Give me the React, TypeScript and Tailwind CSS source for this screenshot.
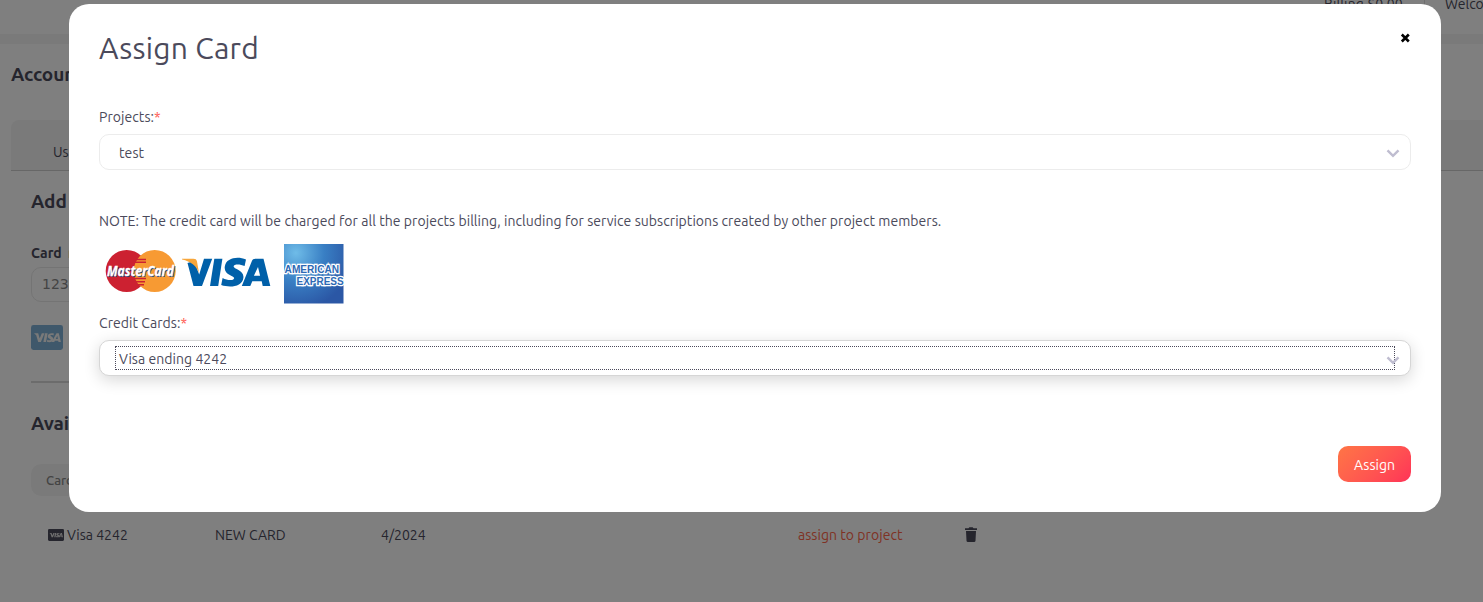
import type { ReactNode } from "react";

function Chevron() {
  return (
    <svg width="14" height="10" viewBox="0 0 14 10" fill="none" stroke="#bfbdd0" strokeWidth="2.4" aria-hidden="true">
      <path d="M1.5 2.3 7 7.8l5.5-5.5" />
    </svg>
  );
}

function MasterCardLogo() {
  return (
    <svg width="72" height="44" viewBox="0 0 72 44" className="block shrink-0">
      <circle cx="21.7" cy="22" r="21" fill="#cc2131" />
      <circle cx="49.7" cy="22" r="21" fill="#f79a33" />
      <path d="M31 10.5h10M30 13.2h11M30 29.5h11M31 32.7h9M33 35.7h6" stroke="#cc2131" strokeWidth="1.6" />
      <text x="2.8" y="27.8" textLength="67" lengthAdjust="spacingAndGlyphs" fill="#26447a" fontFamily="Open Sans, sans-serif" fontWeight="700" fontStyle="italic" fontSize="15">MasterCard</text>
      <text x="2" y="27" textLength="67" lengthAdjust="spacingAndGlyphs" fill="#fff" stroke="#fff" strokeWidth="0.3" fontFamily="Open Sans, sans-serif" fontWeight="700" fontStyle="italic" fontSize="15">MasterCard</text>
    </svg>
  );
}

function VisaLogo() {
  return (
    <svg width="90" height="30" viewBox="0 0 90 30" className="block shrink-0">
      <path fill="#0060a9" d="M12 4 17.2 17.5 22 1.7H30.2L20 29H11.5L5.5 6Z" />
      <path fill="#0060a9" d="M32.3 1.7H40.4L36.2 29H28Z" />
      <path fill="#0060a9" d="M64 2.4 62.6 9.1C58.5 7 52 6.6 51.6 9.4c-.3 2.5 10.7 3.6 9.8 11.3C60.4 29.8 48 31 39.2 28l1.4-7c4.7 2.6 11.2 2.8 11.5.2.4-2.8-10.6-3.1-9.3-11.6C44 .9 55.3-1 64 2.4Z" />
      <path fill="#0060a9" fillRule="evenodd" d="M73.5 1.7h8L88.3 29h-7.6l-1-4.7h-9.4L68.3 29h-8.5L69.8 4.2c.8-1.8 1.7-2.5 3.7-2.5ZM76 10 71.9 18.8h6.2Z" />
      <path fill="#f7a63b" d="M0 1.7h11.5c2 0 3 .7 3.5 2.7L17 16C14.3 8.7 9 4.4 0 2.5Z" />
    </svg>
  );
}

function AmexLogo() {
  return (
    <svg width="61" height="60" viewBox="0 0 61 60" className="block shrink-0">
      <defs>
        <radialGradient id="amex" cx="0.2" cy="0.15" r="0.95">
          <stop offset="0" stopColor="#6fbce8" />
          <stop offset="0.5" stopColor="#397fc4" />
          <stop offset="1" stopColor="#2b57a5" />
        </radialGradient>
      </defs>
      <rect width="59.5" height="59.5" fill="url(#amex)" />
      <g fontFamily="Liberation Sans, sans-serif" fontWeight="700" fontSize="10.8" fill="#2d69b4" stroke="#fff" strokeWidth="2.6" paintOrder="stroke">
        <text x="0.6" y="29.2" textLength="54.5" lengthAdjust="spacingAndGlyphs">AMERICAN</text>
        <text x="12.5" y="41.4" textLength="47.2" lengthAdjust="spacingAndGlyphs">EXPRESS</text>
      </g>
    </svg>
  );
}

function CardBadge({ width, height, bg, fg }: { width: number; height: number; bg: string; fg: string }) {
  return (
    <svg width={width} height={height} viewBox="0 0 32 26" preserveAspectRatio="none" className="block shrink-0">
      <rect width="32" height="26" rx="2.5" fill={bg} />
      <g fill={fg}>
        <path d="M3 8.5h4.2l1.5 5.6 2.1-5.6h2.7L9.9 17.8H7.2L5.2 10.6Z" />
        <path d="M14 8.5h2.6L15 17.8h-2.6Z" />
        <path d="M22.9 8.8l-.4 2.1c-1.7-.7-3.2-.6-3.2.1 0 .9 2.9 1.1 2.9 3.6 0 3-3.2 4-6.3 2.9l.4-2.1c1.7.8 3.3.7 3.3-.1 0-1-2.9-1-2.9-3.5 0-2.7 3.1-3.9 6.2-3Z" />
        <path fillRule="evenodd" d="M25.5 8.5h2.3l2.1 9.3h-2.4l-.3-1.5h-3.3l-.7 1.5h-2.6ZM26.3 11.3l-1.5 3.2h2.1Z" />
      </g>
    </svg>
  );
}

function Label({ children }: { children: ReactNode }) {
  return (
    <div className="h-5 text-[14px] leading-5 tracking-[0.06px]">
      {children}
      <span className="text-[#ff5a50]">*</span>
    </div>
  );
}

function AccountPage() {
  return (
    <div className="h-full w-full overflow-hidden bg-white">
      <header className="flex h-[34px] justify-end overflow-hidden">
        <div className="-mt-[6px] flex h-5 w-[159px] shrink-0 text-[14px] leading-5">
          <span className="w-[100px] shrink-0 tracking-[0.12px] whitespace-nowrap">Billing $0.00</span>
          <span className="mr-5 shrink-0 border-l border-[#dddddd]" />
          <span className="shrink-0">Welcome</span>
        </div>
      </header>
      <div className="h-[10px] bg-[#f5f5f5]" />
      <main className="pl-[11px]">
        <h1 className="mt-4 h-7 text-[19px] leading-7 font-semibold tracking-[-0.1px]">Account</h1>
        <nav className="mt-8 flex h-[51px] items-end rounded-tl-lg border-b border-[#cecece] bg-[#f5f5f5] pb-2 pl-[42px] text-[14px] leading-5">
          Users
        </nav>
        <section className="pl-5">
          <h2 className="mt-4 h-7 text-[19px] leading-7 font-semibold tracking-[-0.1px]">Add Card</h2>
          <div className="mt-[28px] h-5 text-[14px] leading-5 font-semibold [word-spacing:3px]">Card number</div>
          <div className="mt-1 flex h-[35px] w-[400px] items-center rounded-[10px] border border-[#e8e8e8] pl-[10px] font-['DejaVu_Sans',sans-serif] text-[14px] text-[#888]">
            1234
          </div>
          <div className="mt-[23px] h-[25px]">
            <CardBadge width={32} height={25} bg="#7fb0d6" fg="#f2f2f2" />
          </div>
          <div className="mt-[31px] h-[2px] w-[600px] bg-[#d8d8d8]" />
          <h2 className="mt-[26px] h-7 text-[19px] leading-7 font-semibold tracking-[-0.1px]">Available</h2>
          <div className="mt-[27px] flex h-8 w-[960px] items-center rounded-[10px] bg-[#f5f5f5] pt-px pl-[15px] text-[13px] font-medium text-[#888]">
            Card
          </div>
          <div className="mt-[29px] flex h-5 pl-[17px] text-[14px] leading-5">
            <span className="flex w-[167px] items-center gap-[3px]">
              <CardBadge width={16} height={12} bg="#4b4a5b" fg="#dddddd" />
              <span>Visa 4242</span>
            </span>
            <span className="w-[166px]">NEW CARD</span>
            <span className="w-[417px]">4/2024</span>
            <span className="w-[167px] tracking-[0.05px] text-[#ff6548]">assign to project</span>
            <svg width="12" height="15" viewBox="0 0 12 15" fill="#4b4a5b" className="mt-[2px]">
              <path d="M0 1.2h3.5L4.3.3h3.4l.8.9H12v1.9H0ZM1 4h10l-.5 9.7q-.1 1.3-1.4 1.3H2.9q-1.3 0-1.4-1.3Z" />
            </svg>
          </div>
        </section>
      </main>
    </div>
  );
}

export default function App() {
  return (
    <div className="grid h-[602px] w-[1483px] overflow-hidden font-['Ubuntu','Noto_Sans',sans-serif] text-[#4b4a5b]">
      <div className="col-start-1 row-start-1 h-[602px] w-[1483px]">
        <AccountPage />
      </div>
      <div className="z-10 col-start-1 row-start-1 flex items-start bg-black/50 pt-1 pl-[69px]">
        <section className="h-[508px] w-[1372px] rounded-[20px] bg-white px-[30px] pt-[26px]" role="dialog" aria-label="Assign Card">
          <div className="flex h-9 justify-between">
            <h1 className="text-[30px] leading-9 tracking-[0.25px]">Assign Card</h1>
            <button aria-label="Close" className="mt-[3px] flex h-[10px] w-[11px]">
              <svg width="11" height="10" viewBox="0 0 11 10" stroke="#000" strokeWidth="2.6" fill="none">
                <path d="m1.8 1.5 7 7M8.8 1.5l-7 7" />
              </svg>
            </button>
          </div>
          <div className="mt-[41px]">
            <Label>Projects:</Label>
          </div>
          <div className="mt-[7px] flex h-9 items-center justify-between rounded-[10px] border border-[#ececec] pt-[2px] pr-[10px] pl-[19px] text-[14px] tracking-[0.1px]">
            <span>test</span>
            <Chevron />
          </div>
          <p className="mt-[41px] h-5 text-[14px] leading-5 tracking-[0.055px] whitespace-nowrap">
            NOTE: The credit card will be charged for all the projects billing, including for service subscriptions created by other project members.
          </p>
          <div className="mt-[13px] flex h-[60px] items-start pl-[6px]">
            <span className="mt-[5px]"><MasterCardLogo /></span>
            <span className="mt-[13px] ml-[5px]"><VisaLogo /></span>
            <span className="ml-[12px]"><AmexLogo /></span>
          </div>
          <div className="mt-[9px]">
            <Label>Credit Cards:</Label>
          </div>
          <div className="relative mt-[7px] flex h-9 items-center rounded-[10px] border border-[#d6d6d6] bg-white pl-[15px] text-[14px] shadow-[0_4px_16px_rgba(0,0,0,0.16)]">
            <span className="flex h-6 w-[1280px] items-center border border-dotted border-[#4b4a5b] pt-[2px] pl-[3px] tracking-[0.05px]">Visa ending 4242</span>
            <span className="absolute top-[14px] right-[10px]"><Chevron /></span>
          </div>
          <div className="mt-[70px] flex justify-end">
            <button className="h-9 w-[73px] rounded-[10px] bg-linear-135 from-[#ff7545] to-[#ff3157] pt-[2px] text-[14px] text-white">Assign</button>
          </div>
        </section>
      </div>
    </div>
  );
}
